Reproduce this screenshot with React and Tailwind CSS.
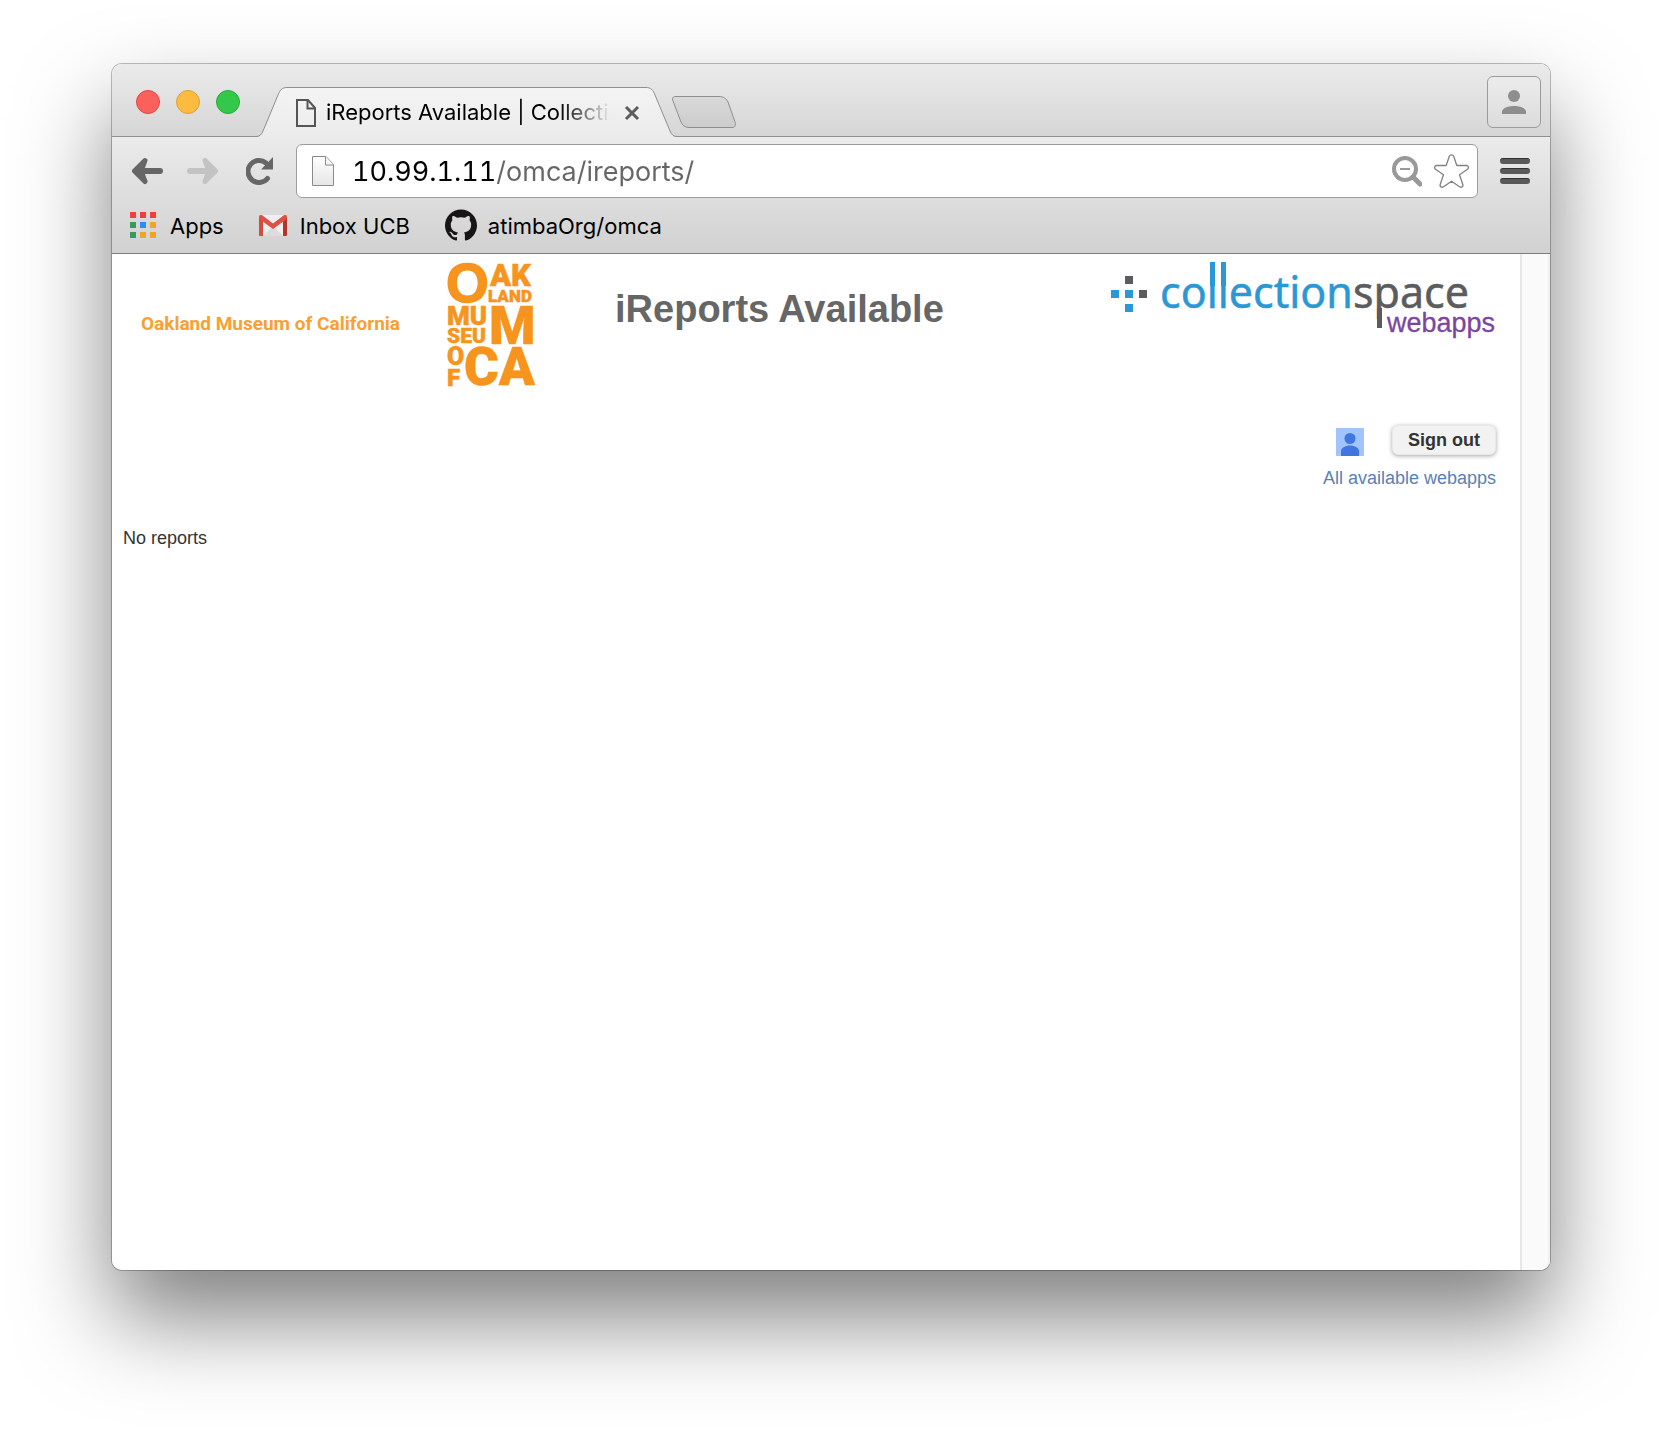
import React from "react";
import { SiGithub } from "react-icons/si";

function TabEdge({ className }) {
  return (
    <svg width="31" height="50" viewBox="0 0 31 50" className={className} aria-hidden="true">
      <path d="M0 50V49.5C4 49.5 5.500 47.500 7 44L22 8C24 3 26 0.500 31 0.500V50Z" fill="url(#tabFill)" />
      <path d="M0 49.500C4 49.500 5.500 47.500 7 44L22 8C24 3 26 0.500 31 0.500" fill="none" stroke="#8f8f8f" />
      <defs>
        <linearGradient id="tabFill" x1="0" y1="0" x2="0" y2="50" gradientUnits="userSpaceOnUse">
          <stop offset="0" stopColor="#f4f4f4" />
          <stop offset="1" stopColor="#ebebeb" />
        </linearGradient>
      </defs>
    </svg>
  );
}

function NewTabShape() {
  return (
    <svg width="64" height="32" viewBox="0 0 64 32" className="block" aria-hidden="true">
      <defs>
        <linearGradient id="newTab" x1="0" y1="0" x2="0" y2="1">
          <stop offset="0" stopColor="#d9d9d9" />
          <stop offset="1" stopColor="#cccccc" />
        </linearGradient>
      </defs>
      <path
        d="M4 0.500H47C52 0.500 54.500 3 56 6L63 26C64.500 30 62.500 31.500 60 31.500H17C12.500 31.500 10.500 29 9 26L1 5C-0.200 2 1 0.500 4 0.500Z"
        fill="url(#newTab)"
        stroke="#8e8e8e"
      />
    </svg>
  );
}

function TabStrip() {
  return (
    <div className="flex h-[73px] items-end border-b border-[#8f8f8f] bg-linear-to-b from-[#ebebeb] to-[#d6d6d6]">
      <div className="flex gap-4 self-start pt-[26px] pl-6">
        <button aria-label="Close window" className="size-6 rounded-full border border-[#e2463f] bg-[#fc605c]" />
        <button aria-label="Minimize window" className="size-6 rounded-full border border-[#e1a032] bg-[#fdbc40]" />
        <button aria-label="Zoom window" className="size-6 rounded-full border border-[#24ab36] bg-[#34c84a]" />
      </div>
      <div className="-mb-px ml-4 flex h-[50px]">
        <TabEdge />
        <div className="flex w-[359px] items-center border-t border-[#8f8f8f] bg-linear-to-b from-[#f4f4f4] to-[#ebebeb] pl-[9px]">
          <svg width="20" height="28" viewBox="0 0 20 28" fill="none" stroke="#555" strokeWidth="2" className="shrink-0" aria-hidden="true">
            <path d="M1 1H12L19 9V27H1Z" />
            <path d="M11.500 1V9.500H19" />
          </svg>
          <span className="ml-[10px] w-[285px] overflow-hidden pb-[2px] whitespace-nowrap text-[22px] leading-7 text-black [mask-image:linear-gradient(to_right,black_82%,transparent)]">
            iReports Available | CollectionSpace
          </span>
          <button aria-label="Close tab" className="ml-[13px]">
            <svg width="16" height="16" viewBox="0 0 16 16" stroke="#5c5c5c" strokeWidth="3" className="block" aria-hidden="true">
              <path d="M2 2L14 14M14 2L2 14" />
            </svg>
          </button>
        </div>
        <TabEdge className="-scale-x-100" />
      </div>
      <button aria-label="New tab" className="mb-2 -ml-[5px]">
        <NewTabShape />
      </button>
      <button
        aria-label="Profile"
        className="mr-[9px] mb-2 ml-auto flex h-[52px] w-[54px] items-center justify-center rounded-md border border-[#9b9b9b] bg-linear-to-b from-[#ececec] to-[#dcdcdc]"
      >
        <svg width="24" height="24" viewBox="0 0 24 24" fill="#8e8e8e" aria-hidden="true">
          <circle cx="12" cy="6" r="6" />
          <path d="M0 24V22C0 18 6 16 12 16S24 18 24 22V24Z" />
        </svg>
      </button>
    </div>
  );
}

function Omnibox() {
  return (
    <div className="flex h-[54px] min-w-0 flex-1 items-center rounded-md border border-[#9c9c9c] bg-white pr-2 pl-[15px]">
      <svg width="22" height="30" viewBox="0 0 22 30" className="shrink-0" aria-hidden="true">
        <defs>
          <linearGradient id="page" x1="0" y1="0" x2="0" y2="1">
            <stop offset="0" stopColor="#fff" />
            <stop offset="1" stopColor="#e6e6e6" />
          </linearGradient>
        </defs>
        <path d="M0.500 0.500H14L21.500 8.500V29.500H0.500Z" fill="url(#page)" stroke="#8a8a8a" />
        <path d="M13.500 0.500V9H21.500" fill="#f6f6f6" stroke="#8a8a8a" />
      </svg>
      <input
        aria-label="Address"
        defaultValue="10.99.1.11/omca/ireports/"
        className="ml-[18px] min-w-0 flex-1 bg-linear-[to_right,#000_144px,#666_144px] bg-clip-text pt-[2px] text-[27px] leading-10 text-transparent tabular-nums caret-black outline-none"
      />
      <button aria-label="Page zoom">
        <svg width="30" height="31" viewBox="0 0 30 31" fill="none" stroke="#999" aria-hidden="true">
          <circle cx="13" cy="13" r="11" strokeWidth="4" />
          <path d="M21 21L28 28" strokeWidth="5" strokeLinecap="round" />
          <path d="M8 13H18" strokeWidth="2" />
        </svg>
      </button>
      <button aria-label="Bookmark this page" className="ml-3">
        <svg width="35" height="34" viewBox="0 0 35 34" fill="none" stroke="#808080" strokeWidth="1.300" strokeLinejoin="round" aria-hidden="true">
          <path d="M15.300 2.200C16 0.400 19 0.400 19.700 2.200L22.800 11.500H32.300C34.500 11.500 35 14 33.500 15.200L25.500 20.800L28.800 30.500C29.400 32.800 27.400 34 25.500 32.700L17.500 27.200L9.500 32.700C7.600 34 5.600 32.800 6.200 30.500L9.500 20.800L1.500 15.200C0 14 0.500 11.500 2.700 11.500H12.200Z" />
        </svg>
      </button>
    </div>
  );
}

function Toolbar() {
  return (
    <div className="border-b border-[#7d7d7d] bg-linear-to-b from-[#ebebeb] to-[#d1d1d1]">
      <div className="flex items-center pt-[7px] pl-5">
        <button aria-label="Back">
          <svg width="31" height="28" viewBox="0 0 31 28" stroke="#666" strokeLinecap="round" strokeLinejoin="round" aria-hidden="true">
            <path d="M13 3.500L2.500 14L13 24.500L9 14Z" fill="#666" strokeWidth="5" />
            <path d="M5 14H28" strokeWidth="6" />
          </svg>
        </button>
        <button aria-label="Forward" className="ml-6">
          <svg width="31" height="28" viewBox="0 0 31 28" stroke="#c3c3c3" strokeLinecap="round" strokeLinejoin="round" aria-hidden="true">
            <path d="M18 3.500L28.500 14L18 24.500L22 14Z" fill="#c3c3c3" strokeWidth="5" />
            <path d="M26 14H3" strokeWidth="6" />
          </svg>
        </button>
        <button aria-label="Reload" className="ml-7">
          <svg width="28" height="28" viewBox="0 0 28 28" aria-hidden="true">
            <path d="M21.500 21.500A11 11 0 1 1 20 6" fill="none" stroke="#666" strokeWidth="5" strokeLinecap="round" />
            <path d="M27 0V12.500H15Z" fill="#666" />
          </svg>
        </button>
        <div className="ml-[22px] flex min-w-0 flex-1">
          <Omnibox />
        </div>
        <button aria-label="Menu" className="mx-5 ml-[22px] flex flex-col gap-1">
          <span className="h-[6px] w-[30px] rounded-full border-t border-[#333] bg-[#595959]" />
          <span className="h-[6px] w-[30px] rounded-full border-t border-[#333] bg-[#595959]" />
          <span className="h-[6px] w-[30px] rounded-full border-t border-[#333] bg-[#595959]" />
        </button>
      </div>
      <nav aria-label="Bookmarks" className="flex h-[55px] items-center pl-[18px] text-[22px] leading-7 text-black">
        <a href="#apps" className="flex items-center">
          <svg width="26" height="26" viewBox="0 0 26 26" className="-mt-[2px]" aria-hidden="true">
            <path d="M0 0h6v6H0zM10 0h6v6h-6zM20 0h6v6h-6z" fill="#f53b3b" />
            <path d="M0 10h6v6H0zM0 20h6v6H0z" fill="#369c58" />
            <path d="M10 10h6v6h-6z" fill="#2a8cf4" />
            <path d="M20 10h6v6h-6zM10 20h6v6h-6zM20 20h6v6h-6z" fill="#f2a427" />
          </svg>
          <span className="ml-[14px]">Apps</span>
        </a>
        <a href="#inbox" className="ml-[35px] flex items-center">
          <svg width="28" height="21" viewBox="0 0 28 21" aria-hidden="true">
            <path d="M1 0H27V21H1Z" fill="#efefef" />
            <path d="M4 21L14 11L24 21Z" fill="#dcdcdc" />
            <path d="M0 2V20Q0 21 1 21H4V5Z" fill="#d54b3d" />
            <path d="M28 2V20Q28 21 27 21H24V5Z" fill="#b63524" />
            <path d="M0 2C0 0 2 -0.500 3.500 0.500L14 8.500L24.500 0.500C26 -0.500 28 0 28 2Q28 3.500 27 4.500L14 14L1 4.500Q0 3.500 0 2Z" fill="#de5145" />
          </svg>
          <span className="ml-[13px]">Inbox UCB</span>
        </a>
        <a href="#omca" className="ml-[35px] flex items-center">
          <SiGithub size={32} color="#171515" className="-mt-[2px]" />
          <span className="ml-[11px]">atimbaOrg/omca</span>
        </a>
      </nav>
    </div>
  );
}

function OmcaLogo() {
  return (
    <svg
      width="90"
      height="126"
      viewBox="0 0 90 126"
      role="img"
      aria-label="Oakland Museum of California logo"
      fill="#f7941e"
      stroke="#f7941e"
      strokeWidth="0.500"
      className="shrink-0 overflow-visible font-['Roboto',Arial,sans-serif] font-black"
    >
      <text x="-1" y="40" fontSize="55" strokeWidth="1.500" className="font-['Liberation_Sans',Arial,sans-serif] font-bold">O</text>
      <text x="43" y="24" fontSize="31">AK</text>
      <text x="41" y="40" fontSize="17">LAND</text>
      <text x="0" y="63" fontSize="26">MU</text>
      <text x="0" y="81" fontSize="21">SEU</text>
      <text x="42" y="82" fontSize="53">M</text>
      <text x="0" y="103" fontSize="25">O</text>
      <text x="0" y="124" fontSize="24">F</text>
      <text x="17" y="123" fontSize="53">CA</text>
    </svg>
  );
}

function CollectionSpaceLogo() {
  return (
    <svg width="386" height="80" viewBox="0 0 386 80" role="img" aria-label="CollectionSpace webapps" className="shrink-0 overflow-visible">
      <path d="M15 14h8v8h-8zM29 28h8v8h-8z" fill="#5b5c5e" />
      <path d="M1 28h8v8H1zM15 28h8v8h-8zM15 42h8v8h-8z" fill="#2a98d5" />
      <path d="M100 0h5v24h-5zM111 0h5v24h-5z" fill="#2a98d5" />
      <path d="M267 46h5v20h-5z" fill="#5b5c5e" />
      <text x="50" y="46" fontSize="43" strokeWidth="0.500" className="font-['Noto_Sans','Open_Sans',sans-serif]">
        <tspan fill="#2a98d5" stroke="#2a98d5">collection</tspan>
        <tspan fill="#5b5c5e" stroke="#5b5c5e">space</tspan>
      </text>
      <text x="277" y="70" fontSize="27" fill="#7d45a0" stroke="#7d45a0" strokeWidth="0.300" className="font-['Liberation_Sans',Arial,sans-serif]">
        webapps
      </text>
    </svg>
  );
}

function Page() {
  return (
    <div className="flex flex-1 font-['Liberation_Sans',Arial,sans-serif] text-[18px] leading-6 text-[#333]">
      <main className="min-w-0 flex-1 pt-2 pr-6 pl-[11px]">
        <header className="flex items-start">
          <div className="flex items-center pl-[18px]">
            <span className="pb-[2px] font-['Roboto',Arial,sans-serif] text-[19px] font-bold whitespace-nowrap text-[#f9a033]">
              Oakland Museum of California
            </span>
            <span className="ml-[47px]">
              <OmcaLogo />
            </span>
          </div>
          <h1 className="mt-6 ml-[78px] text-[38px] leading-[46px] font-bold whitespace-nowrap text-[#666]">
            iReports Available
          </h1>
          <div className="ml-auto">
            <CollectionSpaceLogo />
          </div>
        </header>
        <div className="mt-9 flex flex-col items-end">
          <div className="flex items-center">
            <svg width="28" height="28" viewBox="0 0 28 28" className="mt-1" aria-hidden="true">
              <path d="M0 0H28V28H0Z" fill="#a1c4fd" />
              <circle cx="14" cy="10.500" r="5.500" fill="#4175e0" />
              <path d="M5 28V23C5 20 9 17.500 14 17.500S23 20 23 23V28Z" fill="#4175e0" />
            </svg>
            <button className="ml-7 h-[30px] rounded-md border border-[#e8e8e8] bg-[#f2f2f2] px-[15px] text-[18px] leading-6 font-bold shadow-[0_1px_4px_rgba(0,0,0,0.35)]">
              Sign out
            </button>
          </div>
          <a href="#webapps" className="mt-[10px] text-[#5980b8]">
            All available webapps
          </a>
        </div>
        <p className="mt-9">No reports</p>
      </main>
      <div className="w-[30px] border-r-2 border-l-2 border-r-[#f0f0f0] border-l-[#e7e7e7] bg-[#fafafa]" />
    </div>
  );
}

export default function App() {
  return (
    <div className="flex min-h-screen flex-col overflow-hidden bg-white px-28 pt-16 pb-40 font-['Inter','Roboto',sans-serif]">
      <div className="flex flex-1 flex-col rounded-[10px] shadow-[0_0_0_1px_rgba(0,0,0,0.25),0_48px_92px_rgba(0,0,0,0.5)]">
        <div className="flex flex-1 flex-col overflow-hidden rounded-[10px] bg-white">
          <TabStrip />
          <Toolbar />
          <Page />
        </div>
      </div>
    </div>
  );
}
